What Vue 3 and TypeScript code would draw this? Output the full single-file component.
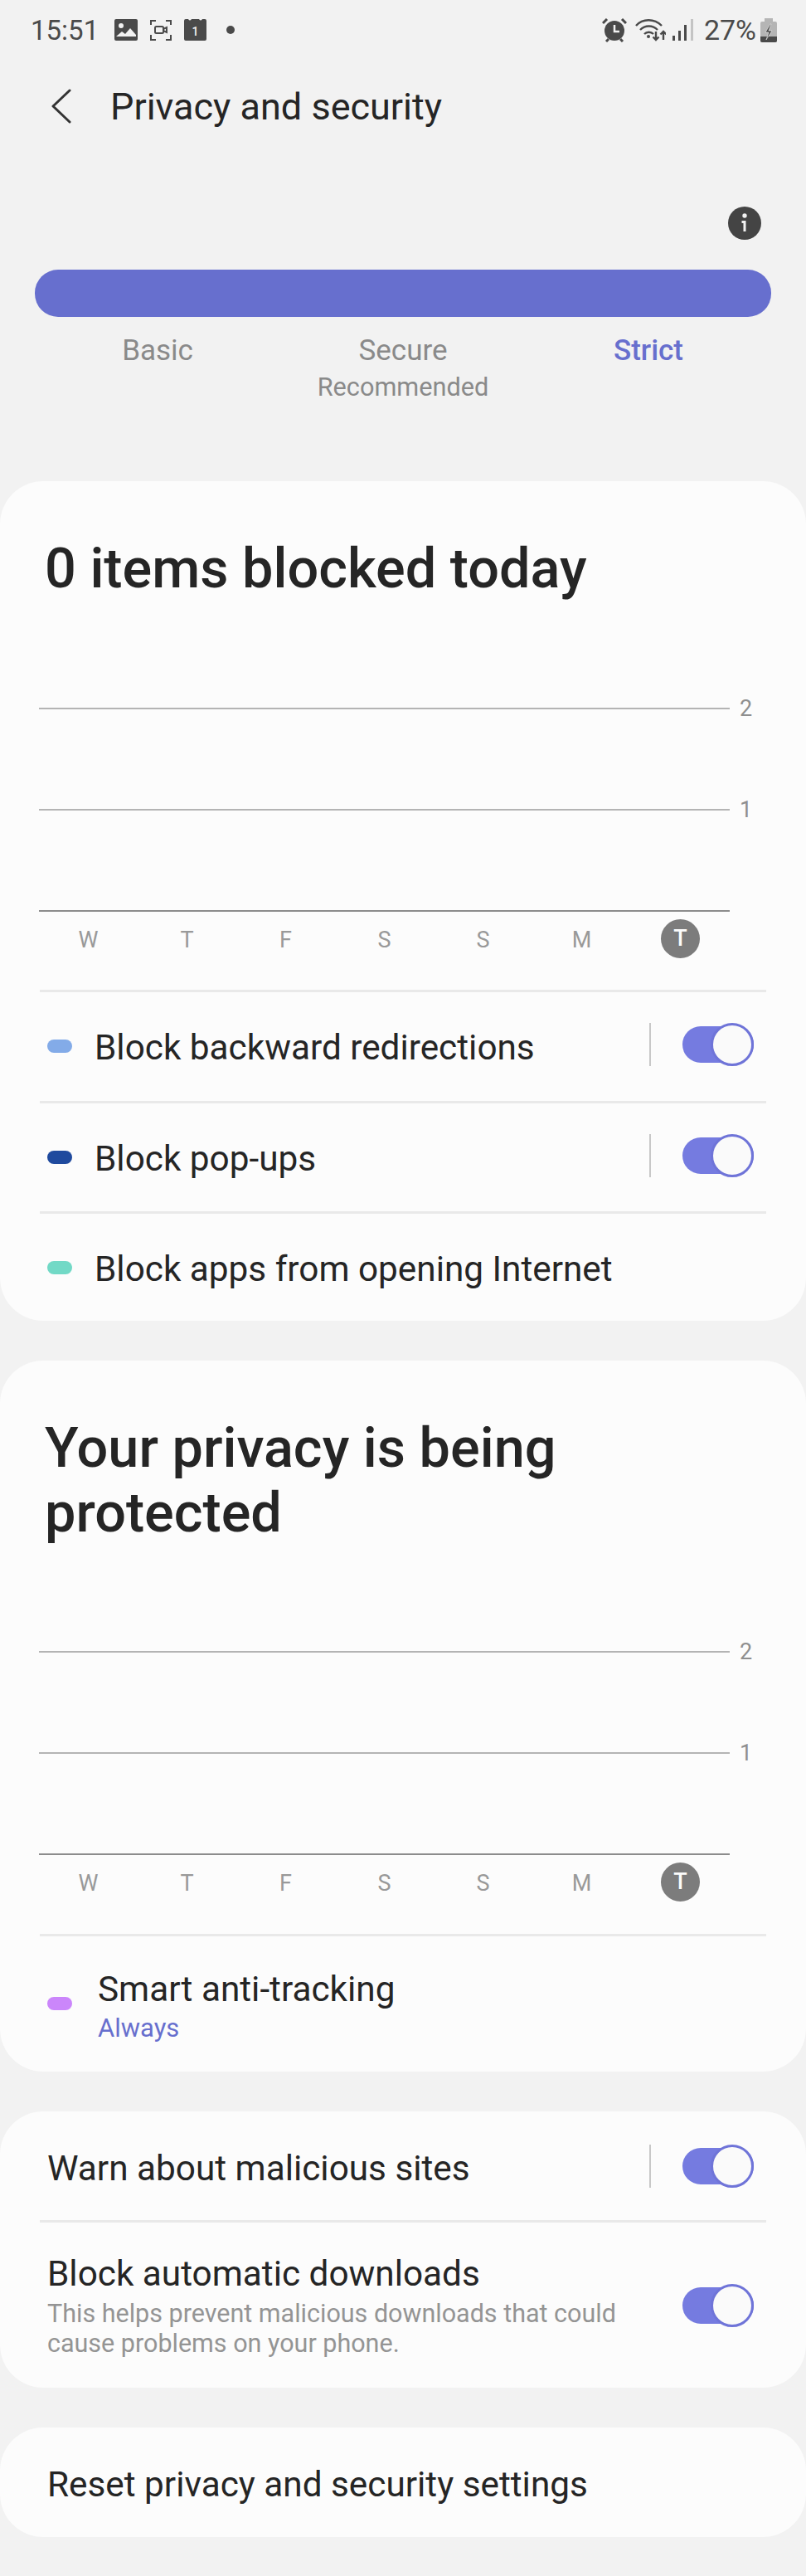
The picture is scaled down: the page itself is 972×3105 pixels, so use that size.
<script setup lang="ts">
const days = ["W", "T", "F", "S", "S", "M", "T"];
const levels = [
  { name: "Basic" },
  { name: "Secure", note: "Recommended" },
  { name: "Strict", active: true },
];
const blockRows = [
  { label: "Block backward redirections", color: "#83abe8", toggle: true },
  { label: "Block pop-ups", color: "#1f4a9e", toggle: true },
  { label: "Block apps from opening Internet", color: "#72d9c6", toggle: false },
];
</script>

<template>
  <div class="page">
    <div class="status">
      <span class="clock">15:51</span>
      <svg class="ic-pic" width="28" height="26" viewBox="0 0 28 26">
        <rect width="28" height="26" rx="2" fill="#4a4a4a" />
        <circle cx="8" cy="8" r="3" fill="#f2f2f2" />
        <path d="M2 21l7-6 4 3 6-7 7 8v2H2z" fill="#f2f2f2" />
      </svg>
      <svg class="ic-rec" width="26" height="26" viewBox="0 0 26 26" fill="none" stroke="#4a4a4a" stroke-width="2">
        <path d="M1 7V2h6M19 2h6v5M25 19v6h-6M7 25H1v-6" />
        <rect x="6" y="9" width="10" height="8" rx="1.5" />
        <path d="M16 12l4-2v6l-4-2" />
      </svg>
      <svg class="ic-cal" width="27" height="26" viewBox="0 0 27 26">
        <path d="M0 2q0-2 2-2h3q2 3 4 0h9q2 3 4 0h3q2 0 2 2v22q0 2-2 2H2q-2 0-2-2z" fill="#4a4a4a" />
        <text x="13.500" y="20" text-anchor="middle" font-size="14" font-weight="500" fill="#f2f2f2">1</text>
      </svg>
      <span class="dot"></span>
      <span class="spacer"></span>
      <svg width="30" height="29" viewBox="0 0 30 29">
        <circle cx="15" cy="15" r="12" fill="#4a4a4a" />
        <path d="M15 8v8h6" fill="none" stroke="#f2f2f2" stroke-width="2.5" />
        <path d="M1 6l5-5M29 6l-5-5" stroke="#4a4a4a" stroke-width="3" fill="none" />
        <path d="M5 28l3-3M25 28l-3-3" stroke="#4a4a4a" stroke-width="3" fill="none" />
      </svg>
      <svg class="ic-wifi" width="37" height="28" viewBox="0 0 37 28" fill="none" stroke="#4a4a4a" stroke-width="2.4">
        <path d="M1 9C9 0 23 0 32 9M6 14c6-6 15-6 21 0M11 19c3-3 8-3 11 0" />
        <circle cx="16" cy="22" r="2" fill="#4a4a4a" stroke="none" />
        <path d="M25 16v10M21.500 22.500l3.500 3.500 3.500-3.500M34 26V16M30.500 19.500l3.500-3.500 3.500 3.500" />
      </svg>
      <svg class="ic-signal" width="25" height="26" viewBox="0 0 25 26">
        <rect x="0" y="20" width="3" height="6" fill="#4a4a4a" />
        <rect x="7" y="14" width="3" height="12" fill="#4a4a4a" />
        <rect x="14" y="7" width="3" height="19" fill="#4a4a4a" />
        <rect x="22" y="0" width="3" height="26" fill="#c4c4c4" />
      </svg>
      <span class="pct">27%</span>
      <svg class="ic-bat" width="20" height="29" viewBox="0 0 20 29">
        <rect x="5" y="0" width="10" height="4" fill="#b5b5b5" />
        <rect x="0" y="4" width="20" height="25" rx="2" fill="#b5b5b5" />
        <path d="M0 22h20v5a2 2 0 0 1-2 2H2a2 2 0 0 1-2-2z" fill="#4a4a4a" />
        <path d="M12 7l-6 10h4l-3 9 7-11h-4l3-8z" fill="#4a4a4a" stroke="#f2f2f2" stroke-width="0.6" />
      </svg>
    </div>

    <div class="topbar">
      <svg width="24" height="42" viewBox="0 0 24 42" fill="none" stroke="#333" stroke-width="3" stroke-linecap="round" stroke-linejoin="round">
        <path d="M22 2L2 21l20 19" />
      </svg>
      <span class="title">Privacy and security</span>
    </div>

    <div class="info-row">
      <span class="info">
        <svg width="40" height="40" viewBox="0 0 40 40">
          <circle cx="20" cy="20" r="20" fill="#444" />
          <circle cx="20" cy="11" r="2.700" fill="#f2f2f2" />
          <path d="M16.500 17h5v13h-3V20h-2z" fill="#f2f2f2" />
        </svg>
      </span>
    </div>

    <div class="level-bar"></div>
    <div class="levels">
      <div v-for="l in levels" :key="l.name" class="level" :class="{ on: l.active }">
        <div class="level-name">{{ l.name }}</div>
        <div v-if="l.note" class="level-note">{{ l.note }}</div>
      </div>
    </div>

    <section class="card card-blocked">
      <h2 class="heading">0 items blocked today</h2>
      <div class="chart">
        <div v-for="n in [2, 1]" :key="n" class="grid-row">
          <div class="grid-line"></div>
          <span class="grid-num">{{ n }}</span>
        </div>
        <div class="grid-base"></div>
        <div class="days">
          <span v-for="(d, i) in days" :key="i" class="day" :class="{ today: i === 6 }">{{ d }}</span>
        </div>
      </div>
      <div class="rows">
        <div v-for="r in blockRows" :key="r.label" class="row">
          <span class="chip" :style="{ background: r.color }"></span>
          <span class="row-label">{{ r.label }}</span>
          <template v-if="r.toggle">
            <span class="vline"></span>
            <span class="toggle"><i></i></span>
          </template>
        </div>
      </div>
    </section>

    <section class="card card-privacy">
      <h2 class="heading">Your privacy is being protected</h2>
      <div class="chart">
        <div v-for="n in [2, 1]" :key="n" class="grid-row">
          <div class="grid-line"></div>
          <span class="grid-num">{{ n }}</span>
        </div>
        <div class="grid-base"></div>
        <div class="days">
          <span v-for="(d, i) in days" :key="i" class="day" :class="{ today: i === 6 }">{{ d }}</span>
        </div>
      </div>
      <div class="rows">
        <div class="row tracking">
          <span class="chip" style="background: #cb86fb"></span>
          <div class="tracking-text">
            <div class="row-label">Smart anti-tracking</div>
            <div class="always">Always</div>
          </div>
        </div>
      </div>
    </section>

    <section class="card card-sites">
      <div class="site-row warn">
        <span class="row-label">Warn about malicious sites</span>
        <span class="vline"></span>
        <span class="toggle"><i></i></span>
      </div>
      <div class="site-row auto">
        <div class="auto-text">
          <div class="row-label">Block automatic downloads</div>
          <div class="desc">This helps prevent malicious downloads that could cause problems on your phone.</div>
        </div>
        <span class="toggle"><i></i></span>
      </div>
    </section>

    <section class="card card-reset">
      <span class="row-label">Reset privacy and security settings</span>
    </section>
  </div>
</template>

<style scoped>
.page {
  width: 972px;
  height: 3105px;
  overflow: hidden;
  background: #f2f2f2;
  color: #252525;
  font-family: Roboto, "Liberation Sans", sans-serif;
}

.status {
  display: flex;
  align-items: center;
  height: 72px;
  padding: 0 35px 0 37px;
  box-sizing: border-box;
  color: #4a4a4a;
}
.clock {
  width: 101px;
  font-size: 33px;
}
.ic-rec {
  margin-left: 15px;
}
.ic-cal {
  margin-left: 15px;
}
.dot {
  margin-left: 24px;
  width: 10px;
  height: 10px;
  border-radius: 50%;
  background: #4a4a4a;
}
.spacer {
  flex: 1;
}
.ic-wifi {
  margin-left: 10px;
}
.ic-signal {
  margin-left: 8px;
}
.pct {
  margin-left: 13px;
  font-size: 34px;
}
.ic-bat {
  margin-left: 5px;
}

.topbar {
  display: flex;
  align-items: center;
  height: 112px;
  padding-left: 62px;
}
.title {
  margin-left: 47px;
  font-size: 45px;
}

.info-row {
  display: flex;
  justify-content: flex-end;
  height: 141px;
  padding: 65px 54px 0 0;
  box-sizing: border-box;
}
.info {
  height: 40px;
}

.level-bar {
  height: 57px;
  margin: 0 42px;
  border-radius: 28px;
  background: #676fce;
}
.levels {
  display: grid;
  grid-template-columns: repeat(3, 1fr);
  height: 198px;
  margin: 0 42px;
  padding-top: 20px;
  box-sizing: border-box;
  color: #8a8a8a;
  text-align: center;
}
.level-name {
  font-size: 35px;
  line-height: 42px;
}
.level-note {
  margin-top: 3px;
  font-size: 30.7px;
  line-height: 40px;
}
.level.on {
  color: #676fce;
  font-weight: 500;
}

.card {
  background: #fcfcfc;
  border-radius: 52px;
}
.card-blocked {
  height: 1012px;
  padding-top: 66px;
  box-sizing: border-box;
}
.card-privacy {
  height: 857px;
  margin-top: 48px;
  padding-top: 66px;
  box-sizing: border-box;
}
.card-sites {
  height: 333px;
  margin-top: 48px;
}
.card-reset {
  display: flex;
  align-items: center;
  height: 132px;
  margin-top: 48px;
  padding: 6px 0 0 57px;
  box-sizing: border-box;
}

.heading {
  margin: 0;
  padding: 0 54px;
  font-size: 66.6px;
  font-weight: 500;
  line-height: 78px;
}
.chart {
  margin-top: 69px;
  padding-left: 47px;
}
.card-privacy .chart {
  margin-top: 68px;
}
.grid-row {
  display: flex;
  align-items: center;
  height: 122px;
}
.grid-line {
  width: 833px;
  height: 2px;
  background: #b4b4b4;
}
.grid-base {
  width: 833px;
  height: 2px;
  margin-top: 60px;
  background: #8c8c8c;
}
.grid-num {
  margin-left: 12px;
  color: #8f8f8f;
  font-size: 27px;
}
.days {
  display: grid;
  grid-template-columns: repeat(7, 119px);
  height: 94px;
  color: #999;
  font-size: 27px;
  line-height: 68px;
  text-align: center;
}
.card-privacy .days {
  height: 95px;
}
.day.today {
  justify-self: center;
  width: 47px;
  height: 47px;
  margin-top: 9px;
  border-radius: 50%;
  background: #7c7c7c;
  color: #fcfcfc;
  font-weight: 500;
  line-height: 47px;
}

.rows {
  margin: 0 48px;
}
.row {
  display: flex;
  align-items: center;
  height: 133.5px;
  border-top: 3px solid #e9e9e9;
  box-sizing: border-box;
}
.chip {
  flex: none;
  width: 30px;
  height: 16px;
  margin-left: 9px;
  border-radius: 8px;
}
.row .row-label {
  margin: 4px 0 0 27px;
}
.row-label {
  flex: 1;
  font-size: 42.3px;
  line-height: 52px;
}
.row .vline,
.row .toggle {
  margin-bottom: 4px;
}
.row.tracking {
  height: 166px;
  padding-top: 6px;
}
.row.tracking .chip {
  margin-bottom: 8px;
}
.tracking-text {
  flex: 1;
  margin-left: 31px;
}
.row.tracking .row-label {
  margin: 0;
}
.always {
  margin-top: 1px;
  color: #676fce;
  font-size: 31px;
  line-height: 40px;
}

.vline {
  flex: none;
  width: 2px;
  height: 52px;
  background: #c8c8c8;
}
.toggle {
  position: relative;
  flex: none;
  width: 86px;
  height: 44px;
  margin: 0 15px 0 38px;
  border-radius: 22px;
  background: #757be0;
}
.toggle i {
  position: absolute;
  top: -4px;
  right: 0;
  width: 52px;
  height: 52px;
  box-sizing: border-box;
  border: 3px solid #6f74d8;
  border-radius: 50%;
  background: #fafafa;
}

.site-row {
  display: flex;
  align-items: center;
  margin: 0 48px;
  padding-left: 9px;
}
.site-row.warn {
  height: 134px;
  border-bottom: 3px solid #e9e9e9;
  box-sizing: border-box;
}
.site-row.warn .row-label {
  margin-top: 6px;
}
.site-row.auto {
  height: 199px;
}
.auto-text {
  flex: 1;
}
.desc {
  width: 700px;
  margin-top: 4px;
  color: #949494;
  font-size: 30.5px;
  line-height: 36px;
}
</style>

<style>
body {
  background: #f2f2f2;
}
</style>
